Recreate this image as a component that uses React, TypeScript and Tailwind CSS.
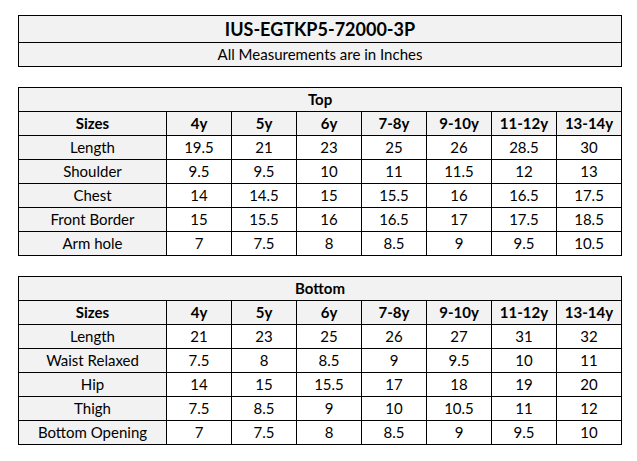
const SIZES = ["4y", "5y", "6y", "7-8y", "9-10y", "11-12y", "13-14y"];

const TOP: [string, string[]][] = [
  ["Length", ["19.5", "21", "23", "25", "26", "28.5", "30"]],
  ["Shoulder", ["9.5", "9.5", "10", "11", "11.5", "12", "13"]],
  ["Chest", ["14", "14.5", "15", "15.5", "16", "16.5", "17.5"]],
  ["Front Border", ["15", "15.5", "16", "16.5", "17", "17.5", "18.5"]],
  ["Arm hole", ["7", "7.5", "8", "8.5", "9", "9.5", "10.5"]],
];

const BOTTOM: [string, string[]][] = [
  ["Length", ["21", "23", "25", "26", "27", "31", "32"]],
  ["Waist Relaxed", ["7.5", "8", "8.5", "9", "9.5", "10", "11"]],
  ["Hip", ["14", "15", "15.5", "17", "18", "19", "20"]],
  ["Thigh", ["7.5", "8.5", "9", "10", "10.5", "11", "12"]],
  ["Bottom Opening", ["7", "7.5", "8", "8.5", "9", "9.5", "10"]],
];

const cell = "border border-black p-0 text-center align-middle leading-none";

function SizeTable({ title, rows }: { title: string; rows: [string, string[]][] }) {
  return (
    <table className="w-[604px] table-fixed border-collapse text-[15px] text-black">
      <colgroup>
        <col className="w-[148px]" />
        {SIZES.map((s) => (
          <col key={s} className="w-[65px]" />
        ))}
      </colgroup>
      <tbody>
        <tr className="h-[24px] bg-[#f2f2f2]">
          <td colSpan={8} className={`${cell} font-bold`}>
            {title}
          </td>
        </tr>
        <tr className="h-[24px] bg-[#f2f2f2]">
          <td className={`${cell} font-bold`}>Sizes</td>
          {SIZES.map((s) => (
            <td key={s} className={`${cell} font-bold`}>
              {s}
            </td>
          ))}
        </tr>
        {rows.map(([label, vals]) => (
          <tr key={label} className="h-[24px]">
            <td className={`${cell} bg-[#f2f2f2]`}>{label}</td>
            {vals.map((v, i) => (
              <td key={i} className={`${cell} bg-white`}>
                {v}
              </td>
            ))}
          </tr>
        ))}
      </tbody>
    </table>
  );
}

export default function App() {
  return (
    <div className="min-h-[461px] w-[637px] bg-white pl-[18px] pt-[15px] font-['Lato',sans-serif]">
      {/* Header */}
      <table className="w-[604px] table-fixed border-collapse text-black">
        <tbody>
          <tr className="h-[27px] bg-[#f2f2f2]">
            <td className={`${cell} text-[18px] font-bold`}>IUS-EGTKP5-72000-3P</td>
          </tr>
          <tr className="h-[24px] bg-[#f2f2f2]">
            <td className={`${cell} text-[15px]`}>All Measurements are in Inches</td>
          </tr>
        </tbody>
      </table>

      <div className="mt-[20px]">
        <SizeTable title="Top" rows={TOP} />
      </div>
      <div className="mt-[20px]">
        <SizeTable title="Bottom" rows={BOTTOM} />
      </div>
    </div>
  );
}
